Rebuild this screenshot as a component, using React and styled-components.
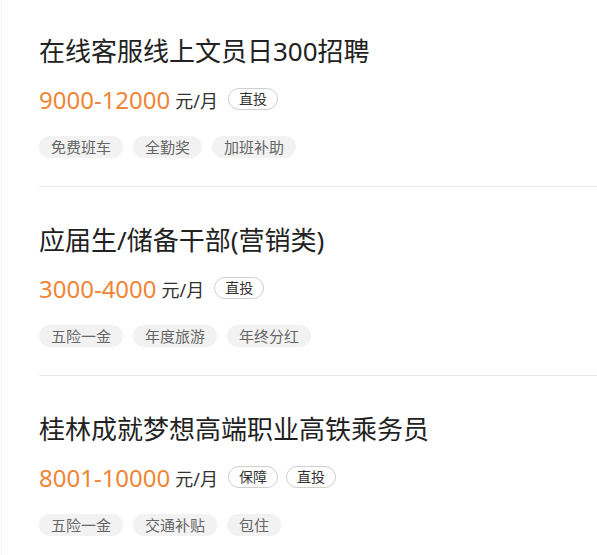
import React from "react";
import styled, { createGlobalStyle } from "styled-components";

const jobs = [
    {
        title: "在线客服线上文员日300招聘",
        salary: "9000-12000",
        badges: ["直投"],
        tags: ["免费班车", "全勤奖", "加班补助"],
    },
    {
        title: "应届生/储备干部(营销类)",
        salary: "3000-4000",
        badges: ["直投"],
        tags: ["五险一金", "年度旅游", "年终分红"],
    },
    {
        title: "桂林成就梦想高端职业高铁乘务员",
        salary: "8001-10000",
        badges: ["保障", "直投"],
        tags: ["五险一金", "交通补贴", "包住"],
    },
]

const GlobalStyle = createGlobalStyle`
    body {
        margin: 0;
        background: #ffffff;
        overflow: hidden;
        font-family: "Noto Sans", "Noto Sans CJK SC", sans-serif;
    }
`

const App = () => {
    return (
        <Page>
            <GlobalStyle />
            <List>
                {jobs.map((job, index) => {
                    return (
                        <Item key={index}>
                            <Title>{job.title}</Title>
                            <SalaryRow>
                                <Salary>{job.salary}</Salary>
                                <Unit>元/月</Unit>
                                {job.badges.map((badge) => (
                                    <Badge key={badge}>{badge}</Badge>
                                ))}
                            </SalaryRow>
                            <Tags>
                                {job.tags.map((tag) => (
                                    <Tag key={tag}>{tag}</Tag>
                                ))}
                            </Tags>
                        </Item>
                    )
                })}
            </List>
        </Page>
    )
}

export default App

const Page = styled.div`
    width: 597px;
    height: 555px;
    overflow: hidden;
    border-left: 1px solid #f4f4f4;
    margin-left: 1px;
    box-sizing: border-box;
`

const List = styled.ul`
    list-style: none;
    margin: 0;
    padding: 0 0 0 37px;
`

const Item = styled.li`
    display: flex;
    flex-direction: column;
    padding: 36px 0 28px;
    border-bottom: 1px solid #e8e8e8;

    &:first-child {
        padding-top: 34px;
    }
`

const Title = styled.h3`
    margin: 0;
    font-size: 26px;
    font-weight: 400;
    line-height: 34px;
    color: #222222;
`

const SalaryRow = styled.div`
    display: flex;
    align-items: center;
    height: 34px;
    margin-top: 14px;
`

const Salary = styled.span`
    font-size: 24px;
    color: #ef8535;
`

const Unit = styled.span`
    font-size: 18px;
    color: #333333;
    margin: 2px 10px 0 5px;
`

const Badge = styled.span`
    box-sizing: border-box;
    height: 22px;
    line-height: 20px;
    padding: 0 10px;
    margin-right: 8px;
    border: 1px solid #cfcfcf;
    border-radius: 11px;
    font-size: 14px;
    color: #333333;
`

const Tags = styled.div`
    display: flex;
    gap: 10px;
    margin-top: 20px;
`

const Tag = styled.span`
    height: 22px;
    line-height: 22px;
    padding: 0 12px;
    border-radius: 11px;
    background: #f2f2f2;
    font-size: 15px;
    color: #666666;
`
